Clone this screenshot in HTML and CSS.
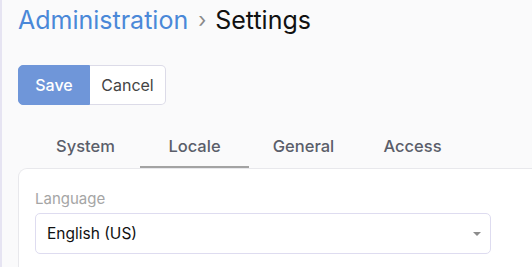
FILE: index.html
```html
<html>

<head>
    <link rel="stylesheet" href="styles.css">
</head>

<body>
    <div class="page">
        <h1 class="crumbs">
            <span class="crumb-link">Administration</span>
            <span class="crumb-sep">&#8250;</span>
            <span class="crumb-current">Settings</span>
        </h1>

        <div class="actions">
            <button class="btn btn-primary">Save</button>
            <button class="btn btn-default">Cancel</button>
        </div>

        <div class="tabs">
            <div class="tab">System</div>
            <div class="tab active">Locale</div>
            <div class="tab">General</div>
            <div class="tab">Access</div>
        </div>

        <div class="card">
            <label class="field-label">Language</label>
            <div class="select">
                <span>English (US)</span>
                <span class="caret"></span>
            </div>
        </div>
    </div>
</body>

</html>
```

FILE: styles.css
```css
body {
    margin: 0;
    font-family: 'Inter', 'Liberation Sans', sans-serif;
    background-color: #fafafb;
    border-left: 2px solid #e6e4f2;
    height: 100%;
    box-sizing: border-box;
    overflow: hidden;
}

.page {
    padding: 4px 0 0 16px;
}

.crumbs {
    margin: 0;
    font-size: 25px;
    font-weight: 400;
    line-height: 32px;
    display: flex;
    align-items: center;
}

.crumb-link {
    color: #4a88d8;
}

.crumb-sep {
    color: #8a8a8a;
    margin: 0 9px 0 10px;
    font-size: 21px;
}

.crumb-current {
    color: #111;
}

.actions {
    display: flex;
    margin-top: 29px;
}

.btn {
    font-family: inherit;
    font-size: 16px;
    font-weight: 500;
    height: 40px;
    padding: 0;
    border: 1px solid #dcdbe8;
    cursor: pointer;
}

.btn-primary {
    background-color: #6f96d9;
    border-color: #6f96d9;
    color: #fff;
    width: 72px;
    border-radius: 5px 0 0 5px;
}

.btn-default {
    background-color: #fff;
    color: #444;
    font-weight: 400;
    width: 76px;
    border-left: none;
    border-radius: 0 5px 5px 0;
}

.tabs {
    display: flex;
    margin-top: 21px;
    padding-left: 13px;
    height: 42px;
}

.tab {
    width: 109px;
    text-align: center;
    font-size: 16.5px;
    font-weight: 500;
    color: #5a5e6a;
    line-height: 40px;
}

.tab.active {
    border-bottom: 2px solid #a3a3a3;
}

.card {
    background-color: #fff;
    border: 1px solid #e8e8ec;
    border-right: none;
    border-radius: 9px 0 0 0;
    padding: 20px 0 0 16px;
    height: 90px;
}

.field-label {
    display: block;
    font-size: 15px;
    color: #a5a5a5;
    line-height: 20px;
}

.select {
    margin-top: 4px;
    width: 456px;
    height: 41px;
    box-sizing: border-box;
    border: 1px solid #dedcf0;
    border-radius: 5px;
    display: flex;
    align-items: center;
    justify-content: space-between;
    padding: 0 9px 0 11px;
    font-size: 15.5px;
    color: #111;
}

.caret {
    width: 0;
    height: 0;
    border-left: 4px solid transparent;
    border-right: 4px solid transparent;
    border-top: 4px solid #8c8c8c;
}
```
